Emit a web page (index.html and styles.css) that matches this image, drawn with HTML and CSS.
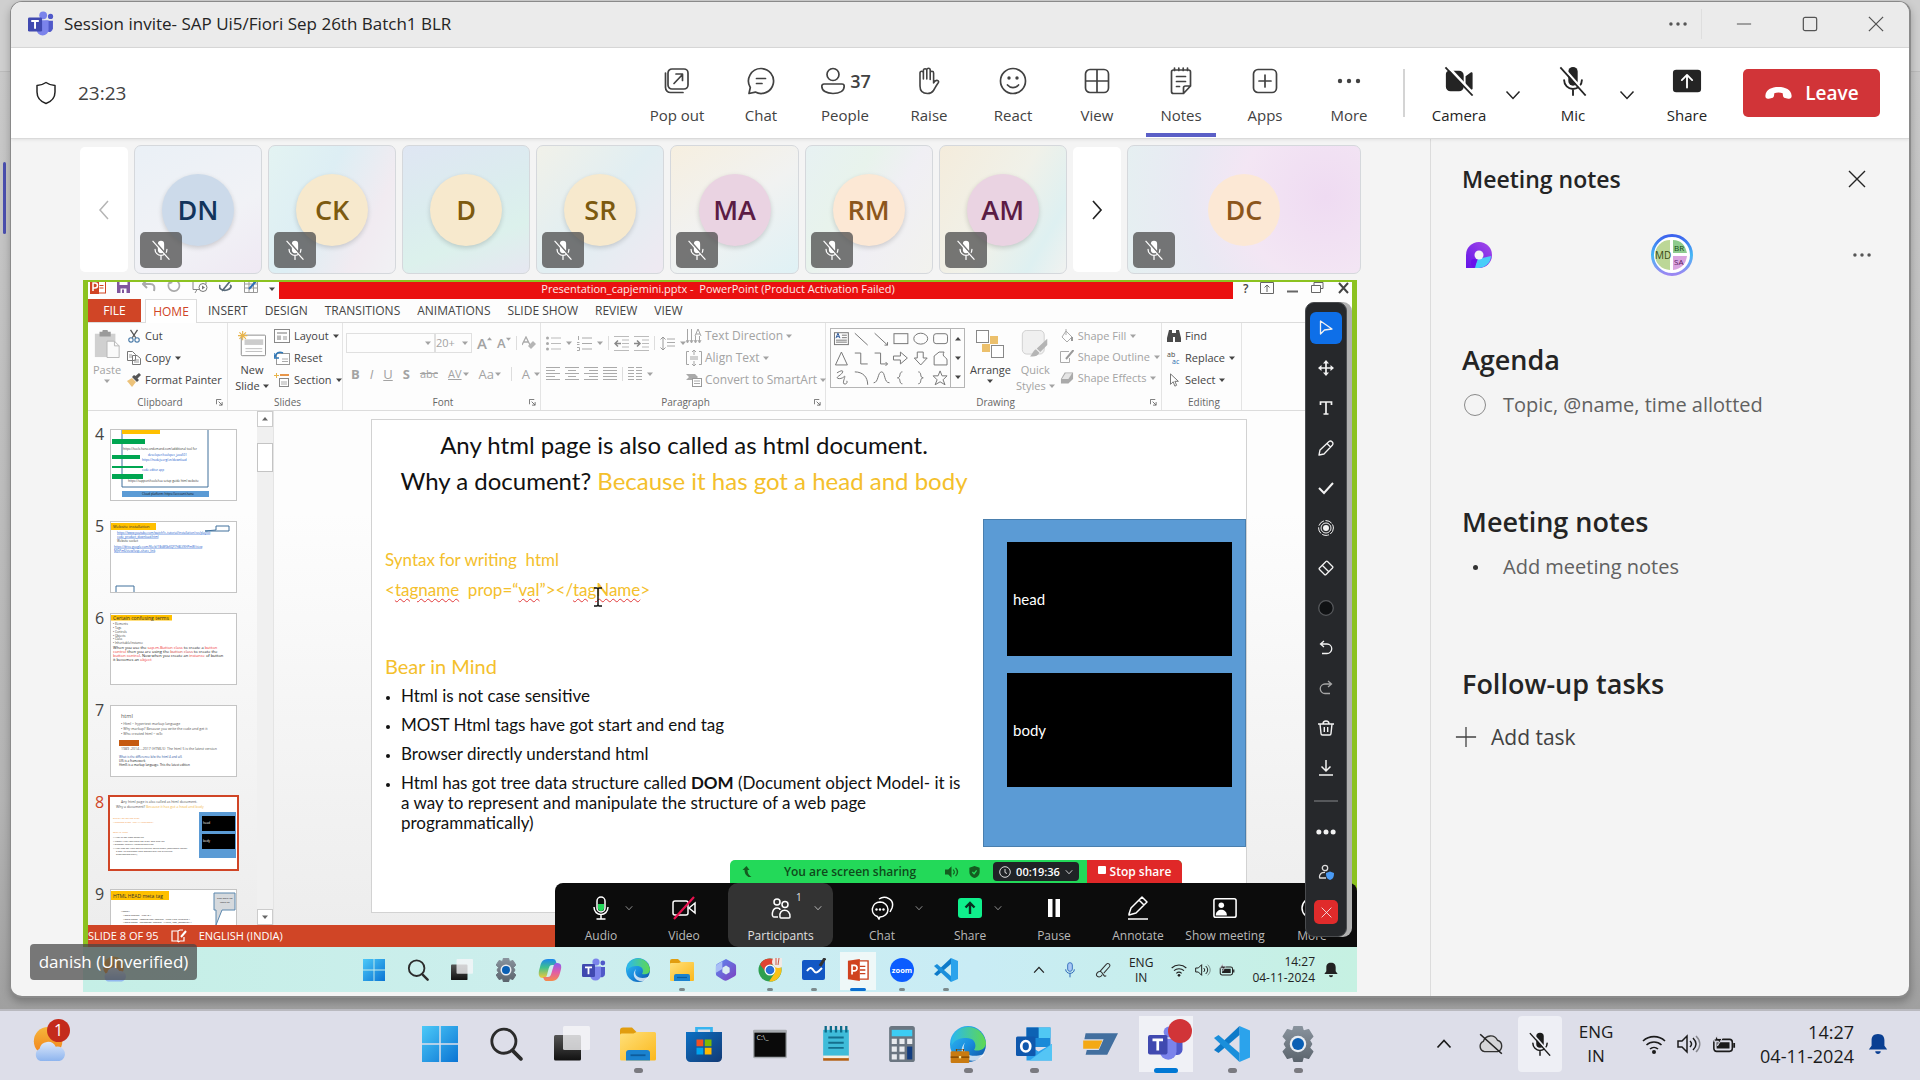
FILE: index.html
```html
<!DOCTYPE html>
<html lang="en">
<head>
<meta charset="utf-8">
<title>Session invite- SAP Ui5/Fiori Sep 26th Batch1 BLR</title>
<link rel="stylesheet" href="styles.css">
</head>
<body>
<svg class="defs" aria-hidden="true">
  <defs>
    <linearGradient id="gWin" x1="0" y1="0" x2="1" y2="1"><stop offset="0" stop-color="#4cc9f8"/><stop offset="1" stop-color="#0a74d4"/></linearGradient>
    <linearGradient id="gFold" x1="0" y1="0" x2="1" y2="1"><stop offset="0" stop-color="#ffe07a"/><stop offset="1" stop-color="#fbb81c"/></linearGradient>
    <linearGradient id="gEdge" x1="0" y1="0" x2="1" y2="1"><stop offset="0" stop-color="#35c1f1"/><stop offset=".5" stop-color="#1a8fe0"/><stop offset="1" stop-color="#0c4fa0"/></linearGradient>
    <linearGradient id="gEdge2" x1="0" y1="0" x2="1" y2="0"><stop offset="0" stop-color="#2bb8ee"/><stop offset="1" stop-color="#5fd94f"/></linearGradient>
    <linearGradient id="gStore" x1="0" y1="0" x2="1" y2="1"><stop offset="0" stop-color="#0c70c4"/><stop offset="1" stop-color="#123a75"/></linearGradient>
    <linearGradient id="gLoop" x1="1" y1="0" x2="0" y2="1"><stop offset="0" stop-color="#a44be8"/><stop offset="1" stop-color="#6414e8"/></linearGradient>
    <linearGradient id="gCop" x1="0" y1="0" x2="0" y2="1"><stop offset="0" stop-color="#1b86ee"/><stop offset=".45" stop-color="#3fc08d"/><stop offset="1" stop-color="#f1c93b"/></linearGradient>
    <linearGradient id="gCop2" x1="0" y1="0" x2="0" y2="1"><stop offset="0" stop-color="#8a5cf0"/><stop offset=".5" stop-color="#e05ca8"/><stop offset="1" stop-color="#f58a4b"/></linearGradient>
    <linearGradient id="gM365" x1="0" y1="0" x2="1" y2="1"><stop offset="0" stop-color="#5d8af0"/><stop offset="1" stop-color="#7d3fc0"/></linearGradient>
    <linearGradient id="gRing" x1="0" y1="0" x2="0" y2="1"><stop offset="0" stop-color="#3d62ee"/><stop offset=".5" stop-color="#45b8f5"/><stop offset="1" stop-color="#9b86f2"/></linearGradient>
    <linearGradient id="gDark" x1="0" y1="0" x2="0" y2="1"><stop offset="0" stop-color="#555"/><stop offset="1" stop-color="#111"/></linearGradient>
    <linearGradient id="gSun" x1="0" y1="0" x2="0" y2="1"><stop offset="0" stop-color="#f6b73b"/><stop offset="1" stop-color="#f07f1b"/></linearGradient>
    <linearGradient id="gCloud" x1="0" y1="0" x2="0" y2="1"><stop offset="0" stop-color="#dce8fb"/><stop offset="1" stop-color="#8db4ee"/></linearGradient>
    <linearGradient id="gGear" x1="0" y1="0" x2="0" y2="1"><stop offset="0" stop-color="#8a949e"/><stop offset="1" stop-color="#5a636c"/></linearGradient>
  </defs>

  <!-- window and call icons -->
  <symbol id="teams" viewBox="0 0 24 24"><circle cx="14" cy="4" r="3.6" fill="#7b83eb"/><circle cx="20.800" cy="5" r="2.400" fill="#5059c9"/><path d="M16 9h7v7a3.500 3.500 0 0 1-5 3z" fill="#5059c9"/><path d="M8 8.500h11v8.500a5.500 5.500 0 0 1-11 0z" fill="#7b83eb"/><rect y="6" width="13" height="13" rx="1.300" fill="#4049b0"/><path d="M3 9.300h7M6.500 9.300v7" stroke="#fff" stroke-width="1.800" fill="none"/></symbol>
  <symbol id="shield" viewBox="0 0 24 24"><path d="M12 1.500c2.600 1.900 5.600 2.800 9 3v6.500c0 5.800-3.500 9.500-9 11.500-5.500-2-9-5.700-9-11.500V4.500c3.400-.2 6.400-1.100 9-3z" fill="none" stroke="currentColor" stroke-width="1.500" stroke-linejoin="round"/></symbol>
  <symbol id="popout" viewBox="0 0 28 28"><g fill="none" stroke="currentColor" stroke-width="1.700" stroke-linecap="round" stroke-linejoin="round"><rect x="5" y="2" width="20" height="20" rx="4"/><path d="M2.500 6v14.500a5 5 0 0 0 5 5H20"/><path d="M11 16.500l8.500-9M13 7h6.500v6.500"/></g></symbol>
  <symbol id="chat" viewBox="0 0 28 28"><g fill="none" stroke="currentColor" stroke-width="1.700" stroke-linecap="round" stroke-linejoin="round"><path d="M14 1.500a12.500 12.500 0 1 1-5.700 23.600L2 26.500l1.300-6A12.500 12.500 0 0 1 14 1.500z"/><path d="M9.500 11.500h9M9.500 16.500h5.500"/></g></symbol>
  <symbol id="person" viewBox="0 0 28 28"><g fill="none" stroke="currentColor" stroke-width="1.700"><circle cx="14" cy="7.500" r="6"/><path d="M5 17h18a2.200 2.200 0 0 1 2.200 2.200c0 4.600-4.600 7.300-11.200 7.300S2.800 23.800 2.800 19.200A2.200 2.200 0 0 1 5 17z"/></g></symbol>
  <symbol id="hand" viewBox="0 0 28 28"><path d="M5 15V6a1.700 1.700 0 0 1 3.400 0v6V3.500a1.700 1.700 0 0 1 3.400 0V12 3a1.700 1.700 0 0 1 3.400 0v9.500V6a1.700 1.700 0 0 1 3.400 0v10c1-2 2.500-3 4-2.500 1.300.5 1.200 1.600.5 2.500-2 2.600-3 5-4.600 7.500-1.300 2-3 3-6 3-5 0-7.500-3-7.500-7.500z" fill="none" stroke="currentColor" stroke-width="1.600" stroke-linejoin="round"/></symbol>
  <symbol id="smile" viewBox="0 0 28 28"><circle cx="14" cy="14" r="12.500" fill="none" stroke="currentColor" stroke-width="1.700"/><circle cx="10" cy="11" r="1.700" fill="currentColor"/><circle cx="18" cy="11" r="1.700" fill="currentColor"/><path d="M8.500 18c3 3.500 8 3.500 11 0" fill="none" stroke="currentColor" stroke-width="1.700" stroke-linecap="round"/></symbol>
  <symbol id="grid" viewBox="0 0 28 28"><path d="M7 2.500h14a4.500 4.500 0 0 1 4.500 4.500v14a4.500 4.500 0 0 1-4.500 4.500H7A4.500 4.500 0 0 1 2.500 21V7A4.500 4.500 0 0 1 7 2.500zM14 2.500v23M2.500 14h23" fill="none" stroke="currentColor" stroke-width="1.700"/></symbol>
  <symbol id="notes" viewBox="0 0 28 28"><g fill="none" stroke="currentColor" stroke-width="1.700" stroke-linecap="round" stroke-linejoin="round"><path d="M4.500 5a2 2 0 0 1 2-2h15a2 2 0 0 1 2 2v14l-7 7.500h-10a2 2 0 0 1-2-2zM23.500 19h-5a2 2 0 0 0-2 2v5.500"/><path d="M7.500 1v2.500M11.800 1v2.500M16.200 1v2.500M20.500 1v2.500M9.500 9.500h9M9.500 14.500h9M9.500 19.500h3"/></g></symbol>
  <symbol id="apps" viewBox="0 0 28 28"><rect x="2.500" y="2.500" width="23" height="23" rx="4.500" fill="none" stroke="currentColor" stroke-width="1.700"/><path d="M14 8v12M8 14h12" stroke="currentColor" stroke-width="1.700" stroke-linecap="round"/></symbol>
  <symbol id="dots" viewBox="0 0 28 28"><g fill="currentColor"><circle cx="5" cy="14" r="2.200"/><circle cx="14" cy="14" r="2.200"/><circle cx="23" cy="14" r="2.200"/></g></symbol>
  <symbol id="bigdots" viewBox="0 0 28 28"><g fill="currentColor"><circle cx="4" cy="14" r="3.500"/><circle cx="14" cy="14" r="3.500"/><circle cx="24" cy="14" r="3.500"/></g></symbol>
  <symbol id="camoff" viewBox="0 0 32 32"><path d="M2 8.500A4 4 0 0 1 6 5h10a5 5 0 0 1 5 5v12a5 5 0 0 1-5 5H7a5 5 0 0 1-5-5zM23 11l5.500-4c1-.6 2 0 2 1v16c0 1-1 1.600-2 1L23 21z" fill="currentColor"/><path d="M4 .500l28 30" stroke="#fff" stroke-width="3"/><path d="M1.500 1.500l29 30" stroke="currentColor" stroke-width="1.900"/></symbol>
  <symbol id="micoff" viewBox="0 0 32 32"><rect x="11" y="1" width="10" height="20" rx="5" fill="currentColor"/><path d="M6.500 15a9.500 9.500 0 0 0 19 0M16 25v6" fill="none" stroke="currentColor" stroke-width="2" stroke-linecap="round"/><path d="M5 1l25 28.500" stroke="var(--cut,#fff)" stroke-width="2.500"/><path d="M2.500 1.500l27 30" stroke="currentColor" stroke-width="1.900"/></symbol>
  <symbol id="shareup" viewBox="0 0 32 28"><rect x="1" y="2" width="30" height="24" rx="3.500" fill="currentColor"/><path d="M16 21V8M10.500 13L16 7.500 21.500 13" fill="none" stroke="var(--cut,#fff)" stroke-width="2" stroke-linecap="round" stroke-linejoin="round"/></symbol>
  <symbol id="hang" viewBox="0 0 32 16"><path d="M1 11C1.500 4 8 1 16 1s14.500 3 15 10c.2 3-1.500 4-4 3.500l-3.500-.7c-1.700-.4-2.300-1.500-2.500-3.500l-.2-2c-2.600-1-7-1-9.600 0l-.2 2c-.2 2-.8 3.100-2.500 3.500L5 14.500C2.500 15 .8 14 1 11z" fill="currentColor"/></symbol>
  <symbol id="down" viewBox="0 0 16 16"><path d="M1.500 4.500L8 11.500l6.500-7" fill="none" stroke="currentColor" stroke-width="1.500"/></symbol>
  <symbol id="up" viewBox="0 0 16 16"><path d="M1.500 11.500L8 4.500l6.500 7" fill="none" stroke="currentColor" stroke-width="1.700"/></symbol>
  <symbol id="left" viewBox="0 0 16 24"><path d="M12 3L4 12l8 9" fill="none" stroke="currentColor" stroke-width="1.500"/></symbol>
  <symbol id="right" viewBox="0 0 16 24"><path d="M4 3l8 9-8 9" fill="none" stroke="currentColor" stroke-width="1.700"/></symbol>
  <symbol id="x" viewBox="0 0 18 18"><path d="M1 1l16 16M17 1L1 17" stroke="currentColor" stroke-width="1.400"/></symbol>
  <symbol id="min" viewBox="0 0 18 18"><path d="M1 9h16" stroke="currentColor" stroke-width="1.400"/></symbol>
  <symbol id="max" viewBox="0 0 18 18"><rect x="1.500" y="1.500" width="15" height="15" rx="2" fill="none" stroke="currentColor" stroke-width="1.400"/></symbol>
  <symbol id="plus" viewBox="0 0 24 24"><path d="M12 1v22M1 12h22" stroke="currentColor" stroke-width="1.400"/></symbol>
  <symbol id="loop" viewBox="0 0 26 26"><path d="M0 26V13A13 13 0 1 1 13 26z" fill="url(#gLoop)"/><path d="M8 26l4-9 13-3a12.500 12.500 0 0 1-12 12z" fill="#49cdf8"/><path d="M9 26c-3 0-4-3-4-6 0-4 4-3 6-2z" fill="#6a12ea"/><circle cx="13" cy="13" r="4.500" fill="#f4f4f4"/></symbol>

  <!-- ribbon icons -->
  <symbol id="caret" viewBox="0 0 6 6"><path d="M0 1.500h6L3 5z" fill="currentColor"/></symbol>
  <symbol id="launch" viewBox="0 0 8 8"><path d="M.5 6V.5H6M3 3l4 4M7 3.500V7H3.500" fill="none" stroke="currentColor"/></symbol>
  <symbol id="pplogo" viewBox="0 0 16 14"><rect x="7" y="1" width="8.500" height="12" fill="#fff" stroke="#d04423"/><path d="M9.500 5.500h4M9.500 8h4" stroke="#d04423"/><path d="M0 0h9v14H0z" fill="#d04423"/><path d="M3 11V3h2a2 2 0 0 1 0 5H3" fill="none" stroke="#fff" stroke-width="1.500"/></symbol>
  <symbol id="save" viewBox="0 0 14 14"><path d="M0 0h13v14H0z" fill="#80579d"/><path d="M2.500 0h8v6h-8z" fill="#fff"/><path d="M3.500 9.500h6V14h-6z" fill="#fff"/><path d="M5 10.500h2V14H5z" fill="#80579d"/></symbol>
  <symbol id="undo" viewBox="0 0 14 12"><path d="M5 0L1 4l4 4M1 4h7c4 0 5 2 4 7" fill="none" stroke="#aaa" stroke-width="2"/></symbol>
  <symbol id="redo" viewBox="0 0 14 14"><path d="M9 1.500a5.500 5.500 0 1 1-5 .4M3 0l1.500 3.500L1 5" fill="none" stroke="#aaa" stroke-width="1.700"/></symbol>
  <symbol id="play" viewBox="0 0 16 14"><path d="M8 9.500H1V1h13v3M5 9.500L3 13" fill="none" stroke="#888"/><circle cx="11" cy="7.500" r="4" fill="#fff" stroke="#777"/><path d="M10 5.500l3 2-3 2z" fill="#777"/></symbol>
  <symbol id="draw" viewBox="0 0 14 14"><path d="M13 0L3 12M1 6c-2 4 3 6 7 5s5-4 3-5" fill="none" stroke="#5a6b7a" stroke-width="1.700"/></symbol>
  <symbol id="tabledraw" viewBox="0 0 14 14"><path d="M.5.500h13v13H.5zM.5 5h13M.5 9h13M5 .500v13M9.500.500v13" fill="none" stroke="#999"/><path d="M14 0L5 10" stroke="#2f6fb5" stroke-width="2"/></symbol>
  <symbol id="paste" viewBox="0 0 28 30"><path d="M1 4h22v25H1z" fill="#d0d0d0"/><path d="M6 2h3a3 3 0 0 1 6 0h3v5H6z" fill="#9a9a9a"/><path d="M14 12h8l5 5v12.500H14z" fill="#fafafa" stroke="#b5b5b5"/><path d="M22 12v5h5" fill="none" stroke="#b5b5b5"/></symbol>
  <symbol id="cut" viewBox="0 0 14 16"><path d="M3 1l6 9M11 1L5 10" stroke="#555" stroke-width="1.500"/><circle cx="3.500" cy="12.500" r="2.500" fill="none" stroke="#4a7ba8" stroke-width="1.300"/><circle cx="10.500" cy="12.500" r="2.500" fill="none" stroke="#4a7ba8" stroke-width="1.300"/></symbol>
  <symbol id="copy" viewBox="0 0 14 14"><path d="M.5.500h5l3 3v6h-8z M5.500 4.500h4.500l3.500 3v6h-8z" fill="#fff" stroke="#777"/><path d="M2 4h3M2 6h3M7 9h5M7 11h5" stroke="#999"/></symbol>
  <symbol id="brush" viewBox="0 0 14 14"><path d="M0 8l5-3 4 4-4 5z" fill="#ecc27a"/><path d="M5 4l5 5 2-2-1.500-1.500L14 2l-2-2-3.500 3L7 2z" fill="#555"/></symbol>
  <symbol id="newslide" viewBox="0 0 30 28"><rect x="3.500" y="4.500" width="26" height="22" rx="1" fill="#fff" stroke="#888"/><path d="M7 9h20v6H7z" fill="#ccc"/><path d="M8 19h18M8 22h18" stroke="#bbb"/><path d="M5 0v10M0 5h10M1.500 1.500l7 7M8.500 1.500l-7 7" stroke="#e8b44a" stroke-width="1.200"/></symbol>
  <symbol id="layout" viewBox="0 0 16 14"><rect x=".5" y=".5" width="15" height="13" fill="#fff" stroke="#888"/><path d="M3 3h10v2H3zM3 6.500h4v4.500H3z" fill="#bbb"/><path d="M9 8h4M9 10h4" stroke="#999"/></symbol>
  <symbol id="reset" viewBox="0 0 16 14"><rect x="2.500" y="2.500" width="13" height="11" fill="#fff" stroke="#999"/><path d="M8 8h6M8 10.500h6" stroke="#aaa"/><path d="M0 2v5h5M1 6c1-4 4-6 8-4" fill="none" stroke="#2f78b8" stroke-width="1.500"/></symbol>
  <symbol id="section" viewBox="0 0 16 14"><path d="M6 2h9" stroke="#e8964a" stroke-width="2"/><rect x="5.500" y="5.500" width="9" height="8" fill="#fff" stroke="#888"/><path d="M7 9h6M7 11h6" stroke="#aaa"/><path d="M2.500 0v5M0 2.500h5" stroke="#e8b44a"/></symbol>
  <symbol id="eraseA" viewBox="0 0 14 14"><path d="M0 9l4-8 4 8M1.500 6h5" fill="none" stroke="#aaa" stroke-width="1.300"/><path d="M11 5l3 3-5 5-3-3z" fill="#b5b5b5"/></symbol>
  <symbol id="bullets" viewBox="0 0 15 15"><path d="M5 2h10M5 7.500h10M5 13h10" stroke="#bbb"/><circle cx="1.500" cy="2" r="1.500" fill="#aaa"/><circle cx="1.500" cy="7.500" r="1.500" fill="#aaa"/><circle cx="1.500" cy="13" r="1.500" fill="#aaa"/></symbol>
  <symbol id="numbers" viewBox="0 0 15 15"><path d="M5 2h10M5 7.500h10M5 13h10M1.500 0v4M0 6.500h2.500M0 8.500h2.500M0 11.500h2.500v3H0" stroke="#aaa" fill="none"/></symbol>
  <symbol id="outdent" viewBox="0 0 15 15"><path d="M0 .500h15M8 4h7M8 7.500h7M8 11h7M0 14.500h15" stroke="#bbb"/><path d="M7 7.500H1M4 4.500l-3 3 3 3" stroke="#888" stroke-width="1.500" fill="none"/></symbol>
  <symbol id="indent" viewBox="0 0 15 15"><path d="M0 .500h15M8 4h7M8 7.500h7M8 11h7M0 14.500h15" stroke="#bbb"/><path d="M0 7.500h6M3 4.500l3 3-3 3" stroke="#888" stroke-width="1.500" fill="none"/></symbol>
  <symbol id="spacing" viewBox="0 0 15 15"><path d="M3 1v13M.5 3.500L3 1l2.500 2.500M.5 11.500L3 14l2.500-2.500" stroke="#999" fill="none"/><path d="M7 3h8M7 6.500h8M7 10h8" stroke="#aaa"/></symbol>
  <symbol id="al1" viewBox="0 0 14 14"><path d="M0 .500h14M0 3.500h9M0 6.500h14M0 9.500h9M0 12.500h14" stroke="#aaa"/></symbol>
  <symbol id="al2" viewBox="0 0 14 14"><path d="M0 .500h14M3 3.500h8M0 6.500h14M3 9.500h8M0 12.500h14" stroke="#aaa"/></symbol>
  <symbol id="al3" viewBox="0 0 14 14"><path d="M0 .500h14M5 3.500h9M0 6.500h14M5 9.500h9M0 12.500h14" stroke="#aaa"/></symbol>
  <symbol id="al4" viewBox="0 0 14 14"><path d="M0 .500h14M0 3.500h14M0 6.500h14M0 9.500h14M0 12.500h14" stroke="#aaa"/></symbol>
  <symbol id="cols" viewBox="0 0 14 14"><path d="M0 .500h6M8 .500h6M0 3.500h6M8 3.500h6M0 6.500h6M8 6.500h6M0 9.500h6M8 9.500h6M0 12.500h6M8 12.500h6" stroke="#aaa"/></symbol>
  <symbol id="tdir" viewBox="0 0 16 16"><path d="M1.500 1v13M5.500 1v13M9.500 8v6M13.500 8v6M0 12l1.500 3L3 12M4 12l1.500 3L7 12M8 12l1.500 3 1.500-3M12 12l1.500 3 1.500-3M9 8l3-7 3 7M10 6h4" fill="none" stroke="#a5a5a5"/></symbol>
  <symbol id="atext" viewBox="0 0 16 16"><path d="M3 1.500H.5v13H3M13 1.500h2.500v13H13M4 7h8M4 9h8M8 0v5M6 2l2-2 2 2M8 16v-5M6 14l2 2 2-2" fill="none" stroke="#a5a5a5"/></symbol>
  <symbol id="smart" viewBox="0 0 16 14"><path d="M0 1h9l3 3-3 3H0l3-3z" fill="#aaa"/><rect x="6.500" y="5.500" width="9" height="8" fill="#fff" stroke="#999"/><path d="M8 8h6M8 10.500h6" stroke="#aaa"/></symbol>
  <symbol id="arrange" viewBox="0 0 28 28"><path d="M14 6h8v8h-8zM6 14h8v8H6z" fill="#ecc06c"/><rect x=".5" y=".5" width="12" height="12" fill="#fff" stroke="#888"/><rect x="15.500" y="15.500" width="12" height="12" fill="#fff" stroke="#888"/></symbol>
  <symbol id="quick" viewBox="0 0 30 32"><rect x=".5" y=".5" width="25" height="27" rx="5" fill="#f0f0f0" stroke="#ccc"/><path d="M29 10v7l-8 8-4-4zM16 22l4 4c-2 4-6 5-11 4 3-1 3-6 7-8z" fill="#b5b5b5"/></symbol>
  <symbol id="fill" viewBox="0 0 14 14"><path d="M6 2l6 6-5 5-5-5zM6 0v6" fill="none" stroke="#aaa"/><path d="M12 8v4" stroke="#999" stroke-width="2"/></symbol>
  <symbol id="outline" viewBox="0 0 14 14"><path d="M9 1.500H.5v11h9V8" fill="none" stroke="#aaa"/><path d="M13.500 0L6 9" stroke="#999" stroke-width="2"/></symbol>
  <symbol id="effects" viewBox="0 0 15 14"><path d="M5 1h9v7l-5 5H1V8z" fill="#aaa"/><path d="M6 2h7L9 8H2z" fill="#e5e5e5"/></symbol>
  <symbol id="find" viewBox="0 0 14 14"><path d="M2 1h3v3h4V1h3l2 8v4H8V8H6v5H0V9z" fill="#4a4a4a"/></symbol>
  <symbol id="arrowptr" viewBox="0 0 12 16"><path d="M2 1v12l3-3 2 5 2-1-2-4.500h4z" fill="#fff" stroke="#666"/></symbol>
  <symbol id="book" viewBox="0 0 16 14"><path d="M7 2H1v10h6M7 2v11M7 2l2-1 3 0M7 13l2-1h4V8" fill="none" stroke="#fff" stroke-width="1.200"/><path d="M15 2l-5 6" stroke="#fff" stroke-width="2"/></symbol>

  <!-- annotate and zoom icons -->
  <symbol id="ptr" viewBox="0 0 16 16"><path d="M2.500 1v13l4-4 7.500-1z" fill="none" stroke="currentColor" stroke-width="1.300" stroke-linejoin="round"/></symbol>
  <symbol id="move" viewBox="0 0 16 16"><path d="M8 2v12M2 8h12" stroke="currentColor" stroke-width="1.700"/><path d="M8 0l3 3.500H5zM8 16l3-3.500H5zM0 8l3.500-3v6zM16 8l-3.500-3v6z" fill="currentColor"/></symbol>
  <symbol id="ttool" viewBox="0 0 16 16"><path d="M2.500 5V2h11v3M8 2v12M5.500 14h5" fill="none" stroke="currentColor" stroke-width="1.700"/></symbol>
  <symbol id="pen" viewBox="0 0 16 16"><path d="M1 15l1-5L11 1.500c2-1.500 5 1 3.500 3.500L6 14zM9 3.500L12.500 7" fill="none" stroke="currentColor" stroke-width="1.300" stroke-linejoin="round"/></symbol>
  <symbol id="check" viewBox="0 0 16 16"><path d="M1 8l5 5 9-10" fill="none" stroke="currentColor" stroke-width="2"/></symbol>
  <symbol id="spot" viewBox="0 0 16 16"><circle cx="8" cy="8" r="3" fill="currentColor"/><circle cx="8" cy="8" r="5" fill="none" stroke="currentColor"/><circle cx="8" cy="8" r="7.400" fill="none" stroke="currentColor" stroke-dasharray="7 1.500"/></symbol>
  <symbol id="eraser" viewBox="0 0 16 16"><path d="M9.500 1.500l5 5c.5.500.5 1 0 1.500L8 14.500c-.5.500-1 .5-1.500 0l-5-5c-.5-.5-.5-1 0-1.500L8 1.500c.5-.5 1-.5 1.500 0zM4.500 5.500L11 12" fill="none" stroke="currentColor" stroke-width="1.300"/></symbol>
  <symbol id="ink" viewBox="0 0 16 16"><circle cx="8" cy="8" r="7.300" fill="#101214" stroke="#56585b" stroke-width="1.300"/></symbol>
  <symbol id="aundo" viewBox="0 0 16 16"><path d="M6 1L2.500 4 6 7M2.500 4H9a4.500 4.500 0 0 1 0 9.500H4" fill="none" stroke="currentColor" stroke-width="1.300"/></symbol>
  <symbol id="aredo" viewBox="0 0 16 16"><path d="M10 1l3.500 3L10 7M13.500 4H7a4.500 4.500 0 0 0 0 9.500h5" fill="none" stroke="currentColor" stroke-width="1.300"/></symbol>
  <symbol id="trash" viewBox="0 0 16 16"><path d="M0 4h16M5 4c0-4 6-4 6 0M2 4l1 9.500c0 1 .5 1.500 1.500 1.500h7c1 0 1.500-.5 1.500-1.500L14 4M6.300 7v5M9.700 7v5" fill="none" stroke="currentColor" stroke-width="1.400"/></symbol>
  <symbol id="dl" viewBox="0 0 16 16"><path d="M8 0v11M3.500 6.500L8 11l4.500-4.500M1 15h14" fill="none" stroke="currentColor" stroke-width="1.500"/></symbol>
  <symbol id="pshield" viewBox="0 0 16 16"><circle cx="7" cy="4" r="2.700" fill="none" stroke="#ddd" stroke-width="1.300"/><path d="M8 14H2c-1 0-1-6 5-5.500" fill="none" stroke="#ddd" stroke-width="1.300"/><path d="M12 7.500l4 1.500c0 4-1 6-4 7-3-1-4-3-4-7z" fill="#4a9bf5"/></symbol>
  <symbol id="zmic" viewBox="0 0 24 24"><rect x="8" y="1" width="8" height="15" rx="4" fill="none" stroke="#fff" stroke-width="1.500"/><path d="M9 8h6v4a3 3 0 0 1-6 0z" fill="#23d959"/><path d="M5 11c0 10 14 10 14 0M12 18.500v4M7.500 23h9" fill="none" stroke="#fff" stroke-width="1.500"/></symbol>
  <symbol id="zvid" viewBox="0 0 24 24"><rect x="1" y="5" width="15" height="14" rx="2" fill="none" stroke="#fff" stroke-width="1.500"/><path d="M17 12l6-5v10z" fill="none" stroke="#fff" stroke-width="1.500"/><path d="M22 1L2 23" stroke="#e8114f" stroke-width="2.200"/></symbol>
  <symbol id="zppl" viewBox="0 0 24 24"><g fill="none" stroke="#fff" stroke-width="1.500"><circle cx="8" cy="6" r="3"/><circle cx="16" cy="8.500" r="3"/><path d="M9 21H5c-3 0-2-9 3-9 2 0 3 1 3 2M11 21c-2-9 11-9 10 0 0 .6-.4 1-1 1h-8c-.6 0-1-.4-1-1z"/></g></symbol>
  <symbol id="zchat" viewBox="0 0 24 24"><g fill="none" stroke="#fff" stroke-width="1.500"><path d="M10 6a8 7.500 0 1 1 0 15l-1 2-1.500-2.500A8 7.500 0 0 1 10 6zM9 3c6-4 16 0 13 9l-2 4"/></g><g fill="#fff"><circle cx="6.500" cy="13.500" r="1.200"/><circle cx="10" cy="13.500" r="1.200"/><circle cx="13.500" cy="13.500" r="1.200"/></g></symbol>
  <symbol id="zshare" viewBox="0 0 24 24"><rect y="2" width="24" height="20" rx="3" fill="#0ff08c"/><path d="M12 18V7M7.500 11.500L12 7l4.500 4.500" fill="none" stroke="#08301f" stroke-width="2.400"/></symbol>
  <symbol id="zpause" viewBox="0 0 24 24"><path d="M6 3h4.500v18H6zM13.500 3H18v18h-4.500z" fill="#fff"/></symbol>
  <symbol id="zpen" viewBox="0 0 24 24"><path d="M3 18l2-6L16 1l5 5-11 11-7 2zM13 4l5 5M2 23h20" fill="none" stroke="#fff" stroke-width="1.500" stroke-linejoin="round"/></symbol>
  <symbol id="zshow" viewBox="0 0 26 22"><rect x="1" y="1" width="24" height="20" rx="2" fill="none" stroke="#fff" stroke-width="1.700"/><circle cx="9" cy="8" r="3" fill="#fff"/><path d="M3 19c0-8 12-8 12 0z" fill="#fff"/></symbol>
  <symbol id="zmore" viewBox="0 0 24 24"><circle cx="12" cy="12" r="10" fill="none" stroke="#fff" stroke-width="1.500"/><circle cx="7" cy="12" r="1.300" fill="#fff"/></symbol>

  <!-- taskbar icons -->
  <symbol id="win" viewBox="0 0 24 24"><path d="M0 0h11.500v11.500H0zM12.500 0H24v11.500H12.500zM0 12.500h11.500V24H0zM12.500 12.500H24V24H12.500z" fill="url(#gWin)"/></symbol>
  <symbol id="search" viewBox="0 0 24 24"><circle cx="10.500" cy="10" r="8.500" fill="none" stroke="#2b2b2b" stroke-width="2"/><path d="M16.500 16.500l6 6" stroke="#2b2b2b" stroke-width="2.600" stroke-linecap="round"/></symbol>
  <symbol id="taskview" viewBox="0 0 24 24"><rect y="6" width="18" height="17" rx="1" fill="url(#gDark)"/><rect x="6" y="0" width="18" height="16" rx="1" fill="#f6f6f8" opacity=".78"/></symbol>
  <symbol id="folder" viewBox="0 0 24 24"><path d="M0 3a2 2 0 0 1 2-2h6l3 3v5H0z" fill="#e19d0f"/><path d="M0 6a1 1 0 0 1 1-1l8 .0 2-1h12a1 1 0 0 1 1 1v17a1 1 0 0 1-1 1H1a1 1 0 0 1-1-1z" fill="url(#gFold)"/><path d="M4 23v-5a2 2 0 0 1 2-2h12a2 2 0 0 1 2 2v5z" fill="#1a82cf"/><path d="M7 19.500h10" stroke="#0d5c9d" stroke-width="1.200"/></symbol>
  <symbol id="gear" viewBox="0 0 24 24"><path d="M9.500 0h5l1 3.500 3.500-1 2.800 4.500L19.500 9.500l1.500 2.500-1.500 2.500 2.300 2.500-2.800 4.500-3.500-1-1 3.500h-5l-1-3.500-3.500 1L2.200 17l2.300-2.500L3 12l1.500-2.500L2.200 7 5 2.500l3.500 1z" fill="url(#gGear)" stroke="url(#gGear)" stroke-linejoin="round"/><circle cx="12" cy="12" r="5.500" fill="#e9edf2"/><circle cx="12" cy="12" r="4" fill="#0a5fb4"/></symbol>
  <symbol id="copilot" viewBox="0 0 24 24"><path d="M10 1h5c3 0 3 3 4 6h-5c-3 0-3 3-5 10-1 3-2 3-4 3-5 0-5-5-3-11 1-4 2-8 8-8z" fill="url(#gCop)"/><path d="M14 23H9c-3 0-3-2-4-4h5c3 0 3-3 5-9 1-4 2-5 4-5 5 0 5 4 3 10-1 4-3 8-8 8z" fill="url(#gCop2)"/></symbol>
  <symbol id="edge" viewBox="0 0 24 24"><circle cx="12" cy="12" r="12" fill="url(#gEdge)"/><path d="M1 9C4-2 21-3 24 11c0 5-5 6-8 5 2-3 1-8-5-8-4 0-8 1-10 5z" fill="url(#gEdge2)"/><path d="M10 11c-3 6 2 11 12 8 1-1 1 0 0 1-8 8-19-1-12-9z" fill="#fff" opacity=".75"/></symbol>
  <symbol id="m365" viewBox="0 0 24 24"><path d="M12 0l9 5c2 1 2 2 2 4v6c0 2 0 3-2 4l-7 4c-2 1-3 1-5 0l-6-4c-2-1-2-2-2-4V9c0-2 0-3 2-4z" fill="url(#gM365)"/><path d="M12 7l4 2.500v5L12 17l-4-2.500v-5z" fill="#d9edf2"/><path d="M8 2.500L3 5.500C1 6.500 1 8 1 9v6l7-4z" fill="#a8bdf6"/></symbol>
  <symbol id="chrome" viewBox="0 0 24 24"><circle cx="12" cy="12" r="11.500" fill="#2e9f4f"/><path d="M12 .500A11.500 11.500 0 0 1 22 6.500H12L7 13 2 6.500A11.500 11.500 0 0 1 12 .5z" fill="#e04333"/><path d="M22 6.500a11.500 11.500 0 0 1-11 17l6-9V7z" fill="#fbc116"/><circle cx="12" cy="12" r="5.500" fill="#fff"/><circle cx="12" cy="12" r="4.300" fill="#2a6fd6"/><circle cx="20" cy="4" r="6" fill="#f0e9e6"/><path d="M18 0v7M21 0l-1 7" stroke="#c85a4a"/></symbol>
  <symbol id="wboard" viewBox="0 0 24 24"><rect y="2" width="23" height="20" rx="2" fill="#1257c4"/><path d="M5 13c3-5 5-3 7 0s4 1 8-3" fill="none" stroke="#fff" stroke-width="2"/><path d="M23 0l-5 8" stroke="#333" stroke-width="3"/></symbol>
  <symbol id="ppt" viewBox="0 0 24 24"><path d="M10 2h13v20H10z" fill="#fff" stroke="#c8401f" stroke-width="1.500"/><path d="M14 8h6M14 12h6M14 16h6" stroke="#c8401f" stroke-width="1.500"/><path d="M1 2L14 0v24L1 22z" fill="#d0421f"/><path d="M5.500 17V7h2.500a2.800 2.800 0 0 1 0 6H5.500" fill="none" stroke="#fff" stroke-width="1.800"/></symbol>
  <symbol id="zoom" viewBox="0 0 24 24"><circle cx="12" cy="12" r="12" fill="#0b5cff"/><text x="12" y="14.500" font-size="7.500" font-weight="700" text-anchor="middle" fill="#fff">zoom</text></symbol>
  <symbol id="vscode" viewBox="0 0 24 24"><path d="M17 0l7 3v18l-7 3z" fill="#2ba3ec"/><path d="M17 0v6L3 18l-3-2z" fill="#0d7ac9"/><path d="M17 24v-6L3 6 0 8z" fill="#1a8fdb"/></symbol>
  <symbol id="store" viewBox="0 0 24 24"><path d="M7 5V1.500h10V5" fill="none" stroke="#37b4f0" stroke-width="1.800"/><path d="M0 4h24v17a3 3 0 0 1-3 3H3a3 3 0 0 1-3-3z" fill="url(#gStore)"/><path d="M7 9h4.500v4.500H7z" fill="#f25022"/><path d="M12.500 9H17v4.500h-4.500z" fill="#7fba00"/><path d="M7 14.500h4.500V19H7z" fill="#00a4ef"/><path d="M12.500 14.500H17V19h-4.500z" fill="#ffb900"/></symbol>
  <symbol id="cmd" viewBox="0 0 24 20"><rect width="24" height="20" rx="1" fill="#a7abb0"/><rect x="1" y="2" width="22" height="17" fill="#0a0a0a"/><text x="2.500" y="7" font-size="5" fill="#ddd">C:\_</text></symbol>
  <symbol id="notepad" viewBox="0 0 24 28"><path d="M2 3h20v21H2z" fill="#3fbcd9"/><path d="M2 24h20v3H2z" fill="#b45f12"/><path d="M2 23h20v2H2z" fill="#f5efe0"/><path d="M4 0v5M8 0v5M12 0v5M16 0v5M20 0v5" stroke="#0c6a88" stroke-width="1.800"/><path d="M6 9h12M6 13h12M6 17h12" stroke="#146f8e" stroke-width="1.500"/></symbol>
  <symbol id="calc" viewBox="0 0 24 28"><rect x="2" width="20" height="28" rx="2" fill="#6b7681"/><path d="M4 3h16v5H4z" fill="#3ccdf4"/><path d="M4 10h4v4H4zM10 10h4v4h-4zM16 10h4v4h-4zM4 16h4v4H4zM10 16h4v4h-4zM4 22h4v4H4zM10 22h4v4h-4z" fill="#e8ebee"/><path d="M16 16h4v10h-4z" fill="#123d80"/></symbol>
  <symbol id="brief" viewBox="0 0 16 12"><rect y="2" width="16" height="10" rx="1" fill="#c97b12"/><path d="M5 2V0h6v2M0 7h16" fill="none" stroke="#7a4300"/><path d="M7 6h2v2H7z" fill="#fce38a"/></symbol>
  <symbol id="outlook" viewBox="0 0 24 24"><path d="M7 1h16v13H7z" fill="#1a8ad8"/><path d="M15 1h8v7h-8z" fill="#50c8f4"/><path d="M7 1h8v7H7z" fill="#0d62b4"/><path d="M7 12l8 5 9-5v11H7z" fill="#2ba0ea"/><path d="M24 12L9 23h15z" fill="#54c5f5"/><rect y="7" width="13" height="13" rx="1" fill="#0f58ad"/><ellipse cx="6.500" cy="13.500" rx="3" ry="3.500" fill="none" stroke="#fff" stroke-width="1.800"/></symbol>
  <symbol id="sap" viewBox="0 0 30 18"><path d="M3 0h27L21 18H3l1-4h10l4-9H2z" fill="#426f9f"/><path d="M1 6h16l-3 7H1z" fill="#f4a914"/></symbol>
  <symbol id="weather" viewBox="0 0 36 40"><circle cx="16" cy="17" r="15" fill="url(#gSun)"/><path d="M8 38a7 7 0 0 1-1-13 9 9 0 0 1 17-2 7.500 7.500 0 0 1 4 15z" fill="url(#gCloud)"/></symbol>
  <symbol id="cloudoff" viewBox="0 0 24 20"><path d="M6 17a5 5 0 0 1-1-9.500 7 7 0 0 1 13-1A5.500 5.500 0 0 1 18 17z" fill="#d5d5d8" stroke="#333" stroke-width="1.300"/><path d="M2 1l20 18" stroke="#222" stroke-width="1.500"/></symbol>
  <symbol id="wifi" viewBox="0 0 24 20"><g fill="none" stroke="currentColor" stroke-width="1.600"><path d="M1 7a16 16 0 0 1 22 0M4.500 11a11 11 0 0 1 15 0M8 15a6 6 0 0 1 8 0"/></g><circle cx="12" cy="18" r="2" fill="currentColor"/></symbol>
  <symbol id="vol" viewBox="0 0 24 20"><g fill="none" stroke="currentColor" stroke-width="1.500"><path d="M1 7h4l5-5v16l-5-5H1zM13 7c2 2 2 4 0 6M16 4c4 4 4 8 0 12"/><path d="M19 2c5 5 5 11 0 16" opacity=".45"/></g></symbol>
  <symbol id="bat" viewBox="0 0 26 20"><rect x="2" y="5" width="20" height="13" rx="3" fill="none" stroke="currentColor" stroke-width="1.700"/><path d="M5 8h14v7H5zM23 9h2v5h-2z" fill="currentColor"/><path d="M6 0L2 7h5l-1 5 5-8H6z" fill="currentColor" stroke="#dfe0ea"/></symbol>
  <symbol id="bell" viewBox="0 0 22 24"><path d="M11 1c5 0 7 3 7 7v6l3 4H1l3-4V8c0-4 2-7 7-7zM8 20h6c0 4-6 4-6 0z" fill="currentColor"/></symbol>
  <symbol id="mic" viewBox="0 0 16 24"><rect x="4.500" y="1" width="7" height="13" rx="3.500" fill="#a9c8f5" stroke="#2b66b8" stroke-width="1.300"/><path d="M1.500 11c0 8 13 8 13 0M8 17v6" fill="none" stroke="#2b66b8" stroke-width="1.500"/></symbol>
  <symbol id="link" viewBox="0 0 20 20"><path d="M6 12L14 3c2-3 6 0 4 3l-7 8M9 16c-2 4-6 3-7 1s2-6 5-5 4 8 7 5" fill="none" stroke="#333" stroke-width="1.300"/></symbol>
</svg>

<div class="backdrop" aria-hidden="true"><span class="backdrop-rail"></span></div>

<main class="window">
  <header class="titlebar">
    <svg class="i26"><use href="#teams"/></svg>
    <h1>Session invite- SAP Ui5/Fiori Sep 26th Batch1 BLR</h1>
    <div class="win-controls">
      <button class="win-more" aria-label="More options"><svg class="i22"><use href="#dots"/></svg></button>
      <button aria-label="Minimize"><svg class="i16"><use href="#min"/></svg></button>
      <button aria-label="Maximize"><svg class="i16"><use href="#max"/></svg></button>
      <button aria-label="Close"><svg class="i16"><use href="#x"/></svg></button>
    </div>
  </header>

  <nav class="callbar">
    <svg class="i24 shield"><use href="#shield"/></svg>
    <span class="timer">23:23</span>
    <div class="call-tools">
      <button><svg class="i28"><use href="#popout"/></svg><span>Pop out</span></button>
      <button><svg class="i28"><use href="#chat"/></svg><span>Chat</span></button>
      <button><span class="people"><svg class="i28"><use href="#person"/></svg><b>37</b></span><span>People</span></button>
      <button><svg class="i28"><use href="#hand"/></svg><span>Raise</span></button>
      <button><svg class="i28"><use href="#smile"/></svg><span>React</span></button>
      <button><svg class="i28"><use href="#grid"/></svg><span>View</span></button>
      <button class="selected"><svg class="i28"><use href="#notes"/></svg><span>Notes</span></button>
      <button><svg class="i28"><use href="#apps"/></svg><span>Apps</span></button>
      <button><svg class="i28"><use href="#dots"/></svg><span>More</span></button>
    </div>
    <div class="devices">
      <button><svg class="i30"><use href="#camoff"/></svg><span>Camera</span></button>
      <button class="drop" aria-label="Camera options"><svg class="i16"><use href="#down"/></svg></button>
      <button><svg class="i30"><use href="#micoff"/></svg><span>Mic</span></button>
      <button class="drop" aria-label="Mic options"><svg class="i16"><use href="#down"/></svg></button>
      <button><svg class="i30"><use href="#shareup"/></svg><span>Share</span></button>
    </div>
    <button class="leave"><svg><use href="#hang"/></svg>Leave</button>
  </nav>

  <div class="content">
    <section class="stage">
      <div class="strip">
        <button class="pager" aria-label="Previous" disabled><svg><use href="#left"/></svg></button>
        <div class="tile t1"><span class="avatar blue">DN</span><span class="muted"><svg><use href="#micoff"/></svg></span></div>
        <div class="tile t2"><span class="avatar gold">CK</span><span class="muted"><svg><use href="#micoff"/></svg></span></div>
        <div class="tile t3"><span class="avatar gold">D</span></div>
        <div class="tile t4"><span class="avatar gold">SR</span><span class="muted"><svg><use href="#micoff"/></svg></span></div>
        <div class="tile t5"><span class="avatar plum">MA</span><span class="muted"><svg><use href="#micoff"/></svg></span></div>
        <div class="tile t6"><span class="avatar peach">RM</span><span class="muted"><svg><use href="#micoff"/></svg></span></div>
        <div class="tile t7"><span class="avatar plum">AM</span><span class="muted"><svg><use href="#micoff"/></svg></span></div>
        <button class="pager" aria-label="Next"><svg><use href="#right"/></svg></button>
        <div class="tile t8"><span class="avatar peach">DC</span><span class="muted"><svg><use href="#micoff"/></svg></span></div>
      </div>

      <div class="share">
        <div class="ppt">
          <div class="ppt-title">
            <div class="qat">
              <svg class="w16"><use href="#pplogo"/></svg><svg class="w14"><use href="#save"/></svg>
              <svg class="w14"><use href="#undo"/></svg><svg class="w14"><use href="#redo"/></svg><svg class="w16"><use href="#play"/></svg><svg class="w14"><use href="#draw"/></svg><svg class="w14"><use href="#tabledraw"/></svg><svg class="caret"><use href="#caret"/></svg>
            </div>
            <div class="ppt-name">Presentation_capjemini.pptx -&nbsp; PowerPoint (Product Activation Failed)</div>
            <div class="ppt-controls"><span>?</span><svg viewBox="0 0 14 12"><path d="M.5.500h13v11H.5zM7 10V3M4.500 5.500L7 3l2.500 2.500" fill="none" stroke="#666"/></svg><svg viewBox="0 0 14 12"><path d="M1 9.500h11" stroke="#666" stroke-width="2"/></svg><svg viewBox="0 0 14 12"><path d="M3 3V.500h9v6H9.500M.5 3.500h9v7h-9z" fill="none" stroke="#666"/></svg><svg viewBox="0 0 14 12"><path d="M2 1l9 10M11 1L2 11" stroke="#444" stroke-width="2"/></svg></div>
          </div>
          <div class="tabs">
            <button class="file">FILE</button><button class="home">HOME</button><button>INSERT</button><button>DESIGN</button><button>TRANSITIONS</button><button>ANIMATIONS</button><button>SLIDE SHOW</button><button>REVIEW</button><button>VIEW</button>
          </div>
          <div class="ribbon">
            <div class="group">
              <div class="group-body">
                <button class="big off"><svg class="w28"><use href="#paste"/></svg><span>Paste</span><svg class="caret"><use href="#caret"/></svg></button>
                <div class="rows">
                  <button><svg class="w14"><use href="#cut"/></svg>Cut</button>
                  <button><svg class="w14"><use href="#copy"/></svg>Copy<svg class="caret"><use href="#caret"/></svg></button>
                  <button><svg class="w14"><use href="#brush"/></svg>Format Painter</button>
                </div>
              </div>
              <div class="group-label">Clipboard<svg><use href="#launch"/></svg></div>
            </div>
            <div class="group">
              <div class="group-body g-slides">
                <button class="big"><svg class="w28"><use href="#newslide"/></svg><span>New</span><span>Slide <svg class="caret"><use href="#caret"/></svg></span></button>
                <div class="rows">
                  <button><svg class="w16"><use href="#layout"/></svg>Layout<svg class="caret"><use href="#caret"/></svg></button>
                  <button><svg class="w16"><use href="#reset"/></svg>Reset</button>
                  <button><svg class="w16"><use href="#section"/></svg>Section<svg class="caret"><use href="#caret"/></svg></button>
                </div>
              </div>
              <div class="group-label">Slides</div>
            </div>
            <div class="group off">
              <div class="group-body g-font">
                <div class="line">
                  <span class="combo face"><select aria-label="Font" disabled><option></option></select><svg class="caret"><use href="#caret"/></svg></span><span class="combo size"><select aria-label="Font size" disabled><option>20+</option></select><svg class="caret"><use href="#caret"/></svg></span>
                  <button class="grow">A<svg class="caret flip"><use href="#caret"/></svg></button><button class="shrink">A<svg class="caret"><use href="#caret"/></svg></button><i class="bar"></i><svg class="w14"><use href="#eraseA"/></svg>
                </div>
                <div class="line marks">
                  <button><b>B</b></button><button><i>I</i></button><button><u>U</u></button><button><b>S</b></button><button class="small"><s>abc</s></button><button class="small"><u>AV</u><svg class="caret"><use href="#caret"/></svg></button><button>Aa<svg class="caret"><use href="#caret"/></svg></button><i class="bar"></i><button>A</button><svg class="caret"><use href="#caret"/></svg>
                </div>
              </div>
              <div class="group-label">Font<svg><use href="#launch"/></svg></div>
            </div>
            <div class="group off">
              <div class="group-body g-para">
                <div class="para-tools">
                  <div class="line"><svg class="w15"><use href="#bullets"/></svg><svg class="caret"><use href="#caret"/></svg><svg class="w15"><use href="#numbers"/></svg><svg class="caret"><use href="#caret"/></svg><i class="bar"></i><svg class="w15"><use href="#outdent"/></svg><svg class="w15"><use href="#indent"/></svg><i class="bar"></i><svg class="w15"><use href="#spacing"/></svg><svg class="caret"><use href="#caret"/></svg></div>
                  <div class="line"><svg class="w14"><use href="#al1"/></svg><svg class="w14"><use href="#al2"/></svg><svg class="w14"><use href="#al3"/></svg><svg class="w14"><use href="#al4"/></svg><i class="bar"></i><svg class="w14"><use href="#cols"/></svg><svg class="caret"><use href="#caret"/></svg></div>
                </div>
                <div class="rows">
                  <button><svg class="w16"><use href="#tdir"/></svg>Text Direction<svg class="caret"><use href="#caret"/></svg></button>
                  <button><svg class="w16"><use href="#atext"/></svg>Align Text<svg class="caret"><use href="#caret"/></svg></button>
                  <button><svg class="w16"><use href="#smart"/></svg>Convert to SmartArt<svg class="caret"><use href="#caret"/></svg></button>
                </div>
              </div>
              <div class="group-label">Paragraph<svg><use href="#launch"/></svg></div>
            </div>
            <div class="group">
              <div class="group-body g-draw">
                <div class="gallery">
                  <svg viewBox="0 0 120 58"><g fill="none" stroke="#777"><rect x="3.500" y="3.500" width="14" height="12"/><path d="M11 6h5M11 8.500h5M5 11h11M5 13h11M24 4l13 12M44 4l13 12M57 16v-3M57 16h-3"/><rect x="63.500" y="4.500" width="14" height="10"/><ellipse cx="90.500" cy="9.500" rx="7" ry="5.500"/><rect x="103.500" y="4.500" width="14" height="10" rx="2.500"/><path d="M10.500 23l6 13h-12zM24 24h6v11h7M44 24h6v11h7M55 33l2 2-2 2M63 27h7v-4l7 6-7 6v-4h-7zM87 23h6v6h4l-6.500 7-6.500-7h3zM104 36V27l5-4h5c-3 5 3 5 3 8v5zM6 44c8-5 7 0 2 3s2 4 5 1-2 6 0 7 4-1 3-3M24 43c8 0 13 5 13 13M43 54c5 0 4-11 8-11s2 11 8 11M72 43c-4 0-1 6-5 6 4 0 1 6 5 6M88 43c4 0 1 6 5 6-4 0-1 6-5 6M110 42l2 5h5l-4 4 2 5-5-3-5 3 2-5-4-4h5z"/></g><path d="M5 9l2-5 2 5M6 7.500h2" fill="none" stroke="#2b579a"/></svg>
                  <div class="gallery-nav"><svg class="caret flip"><use href="#caret"/></svg><svg class="caret"><use href="#caret"/></svg><svg class="caret"><use href="#caret"/></svg></div>
                </div>
                <button class="big"><svg class="w28"><use href="#arrange"/></svg><span>Arrange</span><svg class="caret"><use href="#caret"/></svg></button>
                <button class="big off"><svg class="w28"><use href="#quick"/></svg><span>Quick</span><span>Styles <svg class="caret"><use href="#caret"/></svg></span></button>
                <div class="rows off">
                  <button><svg class="w14"><use href="#fill"/></svg>Shape Fill<svg class="caret"><use href="#caret"/></svg></button>
                  <button><svg class="w14"><use href="#outline"/></svg>Shape Outline<svg class="caret"><use href="#caret"/></svg></button>
                  <button><svg class="w14"><use href="#effects"/></svg>Shape Effects<svg class="caret"><use href="#caret"/></svg></button>
                </div>
              </div>
              <div class="group-label">Drawing<svg><use href="#launch"/></svg></div>
            </div>
            <div class="group">
              <div class="group-body">
                <div class="rows">
                  <button><svg class="w14"><use href="#find"/></svg>Find</button>
                  <button><svg class="w14" viewBox="0 0 14 14"><text x="0" y="6" font-size="7" fill="#444">ab</text><text x="5" y="13" font-size="7" fill="#2b6cb0">ac</text></svg>Replace<svg class="caret"><use href="#caret"/></svg></button>
                  <button><svg class="w14"><use href="#arrowptr"/></svg>Select<svg class="caret"><use href="#caret"/></svg></button>
                </div>
              </div>
              <div class="group-label">Editing</div>
            </div>
          </div>

          <div class="ppt-body">
            <ol class="thumbs">
              <li><span>4</span><svg viewBox="0 0 125 70"><path d="M11 0v57h86V0" fill="none" stroke="#41719c"/><path d="M11 0h38v4H11z" fill="#ffc000"/><path d="M1 9h33v5H1zM1 25h28v4H1zM1 36h31v2H1zM1 44h31v5H1z" fill="#00a651"/><path d="M11 61h87v6H11z" fill="#5b9bd5"/><g font-size="3"><text x="12" y="20" fill="#333">https://tools.hana.ondemand.com/additional tool for</text><text x="37" y="26" fill="#1155cc">developer/toolspec_java501</text><text x="31" y="31" fill="#1155cc">https://nodejs.org/en/download</text><text x="31" y="41" fill="#1155cc">code editor app</text><text x="17" y="52" fill="#333">https://support/tools/tea setup guide html website</text><text x="31" y="65" fill="#111">Cloud platform: https://account.hana</text></g></svg></li>
              <li><span>5</span><svg viewBox="0 0 125 70"><path d="M0 1h45v7H0z" fill="#ffc000"/><text x="2" y="6" font-size="4" fill="#333">Website installation</text><path d="M94 9l11-1V4h13v5z" fill="#fff" stroke="#41719c"/><g font-size="3" fill="#1155cc" text-decoration="underline"><text x="6" y="11.500">https://www.youtube.com/watch?v=tutorial/installation/css/playlist</text><text x="6" y="15.500">code_product_download.html</text><text x="3" y="25.500">https://drive.google.com/file/d/1BsW0bKQY7hBLVXHPmW/view</text><text x="3" y="29.500">MJhPm6/view?usp=share_link</text></g><text x="6" y="20" font-size="3" fill="#333">Website socket</text><path d="M5 70v-6h18v6" fill="none" stroke="#41719c"/></svg></li>
              <li><span>6</span><svg viewBox="0 0 125 70"><path d="M0 1h61v5.500H0z" fill="#ffc000"/><text x="2" y="5.500" font-size="5" fill="#333">Certain confusing terms</text><g font-size="3" fill="#444"><text x="2" y="11">• Elements</text><text x="2" y="15">• Tags</text><text x="2" y="18.500">• Controls</text><text x="2" y="22.500">• Objects</text><text x="2" y="26">• Class</text><text x="2" y="30">• Inheritable/instance</text></g><g font-size="4" fill="#111"><text x="2" y="34.500">When you use the <tspan fill="#e33">sap.m.Button class</tspan> to create a <tspan fill="#e33">button</tspan></text><text x="2" y="38.500"><tspan fill="#e33">control</tspan> then you are using the <tspan fill="#c33">button class</tspan> to create the</text><text x="2" y="42.500"><tspan fill="#e33">button control</tspan>. Now when you create an <tspan fill="#e33">instance</tspan> of button</text><text x="2" y="46.500">it becomes an <tspan fill="#e33">object</tspan></text></g></svg></li>
              <li><span>7</span><svg viewBox="0 0 125 70"><text x="10" y="12" font-size="5.500" fill="#555">html</text><g font-size="3.500" fill="#555"><text x="10" y="19">• Html = hypertext markup language</text><text x="10" y="24">• Why markup? Because you write the code and get it</text><text x="10" y="29">• Who created html = w3c</text><text x="10" y="44">1989 -2014....2017 (HTML5)&nbsp; The html 5 is the latest version</text></g><path d="M8 34h20v6H8z" fill="#c55a11"/><g font-size="3" fill="#111"><text x="8" y="52" fill="#1f4e9c">What is the difference b/w the html 4 and ui5</text><text x="8" y="56">UI5 is a framework</text><text x="8" y="60">Html5 is a markup language. This the latest edition</text></g></svg></li>
              <li class="current"><span>8</span><svg viewBox="0 0 125 70"><g font-size="3.500" fill="#555"><text x="10" y="5">Any html page is also called as html document.</text><text x="5" y="10">Why a document? <tspan fill="#f2b84a">Because it has got a head and body</tspan></text></g><g font-size="2.500" fill="#f29b4a"><text x="2" y="21">Syntax for writing html</text><text x="2" y="25">&lt;tagname prop="val"&gt;&lt;/tagName&gt;</text><text x="2" y="35">Bear in Mind</text></g><g font-size="2.500" fill="#333"><text x="2" y="39.500">• Html is not case sensitive</text><text x="2" y="43.500">• MOST Html tags have got start and end tag</text><text x="2" y="47">• Browser directly understand html</text><text x="2" y="51">• Html has got tree data structure called DOM (Document object</text><text x="5" y="54">a way to represent and manipulate the structure</text><text x="5" y="57">programmatically)</text></g><path d="M88 14h37v46H88z" fill="#5b9bd5"/><path d="M91 18h33v15H91zM91 36h33v15H91z"/><g font-size="3" fill="#fff"><text x="92" y="26">head</text><text x="92" y="44">body</text></g></svg></li>
              <li><span>9</span><svg viewBox="0 0 125 70"><path d="M0 1h58v9H0z" fill="#ffc000"/><text x="2" y="7.500" font-size="5" fill="#333">HTML HEAD meta tag</text><path d="M103 3h21v17h-13l-6 15v-15h-2z" fill="#d5d9dd" stroke="#5b87ad"/><g font-size="2.500" fill="#222"><text x="106" y="9">This meta tag</text><text x="109" y="13">used for</text><text x="10" y="22">&lt;head&gt;</text><text x="12" y="26">&lt;meta charset="UTF-8"&gt;</text><text x="12" y="29.500">&lt;meta name="description" content="Free Web tutorials"&gt;</text><text x="12" y="33">&lt;meta name="keywords" content="HTML, CSS, JavaScript"&gt;</text></g></svg></li>
            </ol>
            <div class="scroll"><span class="scroll-btn"><svg class="caret flip"><use href="#caret"/></svg></span><span class="scroll-thumb"></span><span class="scroll-btn end"><svg class="caret"><use href="#caret"/></svg></span></div>
            <div class="canvas">
              <article class="slide">
                <div class="slide-text">
                  <p class="slide-title">Any html page is also called as html document.<br>Why a document? <em>Because it has got a head and body</em></p>
                  <p class="syntax">Syntax for writing&nbsp; html<br>&lt;<u>tagname</u>&nbsp; prop=“<u>val</u>”&gt;&lt;/<u>tagName</u>&gt;<svg class="ibeam" viewBox="0 0 10 20"><path d="M1 1h3l1 1 1-1h3M5 2v16M1 19h3l1-1 1 1h3" fill="none" stroke="#111" stroke-width="1.500"/></svg></p>
                  <h2>Bear in Mind</h2>
                  <ul>
                    <li>Html is not case sensitive</li>
                    <li>MOST Html tags have got start and end tag</li>
                    <li>Browser directly understand html</li>
                    <li>Html has got tree data structure called <b>DOM</b> (Document object Model- it is a way to represent and manipulate the structure of a web page programmatically)</li>
                  </ul>
                </div>
                <div class="page-box"><div>head</div><div>body</div></div>
              </article>
            </div>
          </div>
          <div class="status"><span>SLIDE 8 OF 95</span><svg class="w16"><use href="#book"/></svg><span>ENGLISH (INDIA)</span></div>
        </div>

        <div class="remote-bar">
          <div class="remote-start"><svg class="i28"><use href="#weather"/></svg></div>
          <div class="remote-apps">
            <span><svg class="i22"><use href="#win"/></svg></span>
            <span><svg class="i22"><use href="#search"/></svg></span>
            <span><svg class="i22"><use href="#taskview"/></svg></span>
            <span><svg class="i24"><use href="#gear"/></svg></span>
            <span><svg class="i24"><use href="#copilot"/></svg></span>
            <span><svg class="i24"><use href="#teams"/></svg></span>
            <span><svg class="i24"><use href="#edge"/></svg></span>
            <span class="run"><svg class="i24"><use href="#folder"/></svg></span>
            <span><svg class="i22"><use href="#m365"/></svg></span>
            <span class="run"><svg class="i24"><use href="#chrome"/></svg></span>
            <span class="run"><svg class="i24"><use href="#wboard"/></svg></span>
            <span class="run active"><svg class="i22"><use href="#ppt"/></svg></span>
            <span class="run"><svg class="i24"><use href="#zoom"/></svg></span>
            <span class="run"><svg class="i24"><use href="#vscode"/></svg></span>
          </div>
          <div class="remote-tray">
            <svg class="i12"><use href="#up"/></svg><svg class="i16"><use href="#mic"/></svg><svg class="i16"><use href="#link"/></svg>
            <span class="lang">ENG<br>IN</span>
            <span class="net"><svg class="i16"><use href="#wifi"/></svg><svg class="i16"><use href="#vol"/></svg><svg class="i16"><use href="#bat"/></svg></span>
            <span class="clock">14:27<br>04-11-2024</span>
            <svg class="i16"><use href="#bell"/></svg>
          </div>
        </div>

        <div class="zoom-dock">
          <div class="share-pill">
            <div class="share-msg"><svg viewBox="0 0 12 12"><path d="M6 11C3 9 2 7 2 4L0 4l4-4 3 4H5c0 3 1 5 4 7z" fill="#145c20"/></svg><span>You are screen sharing</span><svg viewBox="0 0 16 14"><path d="M0 4h4l4-4v14l-4-4H0z" fill="#145c20"/><path d="M10 4c2 2 2 4 0 6M13 2c3 3 3 7 0 10" fill="none" stroke="#145c20" stroke-width="1.500"/></svg><svg viewBox="0 0 12 14"><path d="M6 0l6 2v5c0 4-3 6-6 7-3-1-6-3-6-7V2z" fill="#145c20"/><path d="M3.500 7l2 2 3-4" fill="none" stroke="#23d959" stroke-width="1.500"/></svg></div>
            <div class="elapsed"><svg class="i12" viewBox="0 0 12 12"><path d="M6 .700a5.300 5.300 0 1 1 0 10.600A5.300 5.300 0 0 1 6 .7M6 3v3.500l2 1" fill="none" stroke="#ddd"/></svg>00:19:36<svg class="i8"><use href="#down"/></svg></div>
            <button class="stop">Stop share</button>
          </div>
          <div class="zoom-bar">
            <button class="z-audio"><svg><use href="#zmic"/></svg><svg class="chev"><use href="#down"/></svg><span>Audio</span></button>
            <button class="z-video"><svg><use href="#zvid"/></svg><span>Video</span></button>
            <button class="z-people"><svg><use href="#zppl"/></svg><sup>1</sup><svg class="chev"><use href="#down"/></svg><span>Participants</span></button>
            <button class="z-chat"><svg><use href="#zchat"/></svg><svg class="chev"><use href="#down"/></svg><span>Chat</span></button>
            <button class="z-share"><svg><use href="#zshare"/></svg><svg class="chev"><use href="#down"/></svg><span>Share</span></button>
            <button class="z-pause"><svg><use href="#zpause"/></svg><span>Pause</span></button>
            <button class="z-note"><svg><use href="#zpen"/></svg><span>Annotate</span></button>
            <button class="z-show"><svg><use href="#zshow"/></svg><span>Show meeting</span></button>
            <button class="z-more"><svg><use href="#zmore"/></svg><span>More</span></button>
          </div>
        </div>

        <div class="annotate">
          <button class="on" aria-label="Mouse"><svg><use href="#ptr"/></svg></button>
          <button aria-label="Select"><svg><use href="#move"/></svg></button>
          <button aria-label="Text"><svg><use href="#ttool"/></svg></button>
          <button aria-label="Draw"><svg><use href="#pen"/></svg></button>
          <button aria-label="Stamp"><svg><use href="#check"/></svg></button>
          <button aria-label="Spotlight"><svg><use href="#spot"/></svg></button>
          <button aria-label="Eraser"><svg><use href="#eraser"/></svg></button>
          <button aria-label="Colour"><svg><use href="#ink"/></svg></button>
          <button aria-label="Undo"><svg><use href="#aundo"/></svg></button>
          <button class="dim" aria-label="Redo"><svg><use href="#aredo"/></svg></button>
          <button aria-label="Clear"><svg><use href="#trash"/></svg></button>
          <button aria-label="Save"><svg><use href="#dl"/></svg></button>
          <hr>
          <button class="wide" aria-label="More"><svg><use href="#bigdots"/></svg></button>
          <button aria-label="Privacy"><svg><use href="#pshield"/></svg></button>
          <button class="quit" aria-label="Close annotation"><svg><use href="#x"/></svg></button>
        </div>
      </div>
      <div class="presenter">danish (Unverified)</div>
    </section>

    <aside class="notes">
      <div class="notes-head"><h2>Meeting notes</h2><button aria-label="Close notes"><svg class="i18"><use href="#x"/></svg></button></div>
      <div class="notes-tools">
        <svg class="i26"><use href="#loop"/></svg>
        <svg class="faces" viewBox="0 0 42 42"><circle cx="21" cy="21" r="19.500" fill="#fff" stroke="url(#gRing)" stroke-width="3"/><path d="M19 6v30a15 15 0 0 1 0-30z" fill="#bcd797"/><path d="M22 6c8 0 12 5 14 13H22z" fill="#8ecb8e"/><path d="M22 22h14c-1 8-6 13-14 14z" fill="#d9a3df"/><text x="4" y="25" font-size="10" fill="#374a14">MD</text><text x="23" y="17" font-size="8" fill="#174a17">BR</text><text x="23" y="31" font-size="8" fill="#5a1d63">SA</text></svg>
        <button aria-label="More note options"><svg class="i22"><use href="#dots"/></svg></button>
      </div>
      <h3>Agenda</h3>
      <label class="note-row"><input type="checkbox"><span>Topic, @name, time allotted</span></label>
      <h3>Meeting notes</h3>
      <ul class="note-list"><li>Add meeting notes</li></ul>
      <h3>Follow-up tasks</h3>
      <button class="add-task"><svg class="i22"><use href="#plus"/></svg>Add task</button>
    </aside>
  </div>
</main>

<footer class="taskbar">
  <div class="task-start"><svg><use href="#weather"/></svg><span>1</span></div>
  <div class="task-apps">
    <button aria-label="Start"><svg class="i36"><use href="#win"/></svg></button>
    <button aria-label="Search"><svg class="i34"><use href="#search"/></svg></button>
    <button aria-label="Task view"><svg class="i36"><use href="#taskview"/></svg></button>
    <button class="run" aria-label="File Explorer"><svg class="i36"><use href="#folder"/></svg></button>
    <button aria-label="Store"><svg class="i36"><use href="#store"/></svg></button>
    <button aria-label="Command Prompt"><svg class="i34"><use href="#cmd"/></svg></button>
    <button aria-label="Notepad"><svg class="i36"><use href="#notepad"/></svg></button>
    <button aria-label="Calculator"><svg class="i36"><use href="#calc"/></svg></button>
    <button class="run" aria-label="Edge"><svg class="i36"><use href="#edge"/></svg><svg class="brief"><use href="#brief"/></svg></button>
    <button class="run" aria-label="Outlook"><svg class="i36"><use href="#outlook"/></svg></button>
    <button aria-label="SAP Logon"><svg class="i36"><use href="#sap"/></svg></button>
    <button class="run active" aria-label="Teams"><svg class="i36"><use href="#teams"/></svg><i class="rec"></i></button>
    <button class="run" aria-label="VS Code"><svg class="i36"><use href="#vscode"/></svg></button>
    <button class="run" aria-label="Settings"><svg class="i36"><use href="#gear"/></svg></button>
  </div>
  <div class="tray">
    <svg class="i16"><use href="#up"/></svg>
    <svg class="i26"><use href="#cloudoff"/></svg>
    <span class="tray-mic"><svg class="i24"><use href="#micoff"/></svg></span>
    <span class="lang">ENG<br>IN</span>
    <span class="net"><svg class="i24"><use href="#wifi"/></svg><svg class="i24"><use href="#vol"/></svg><svg class="i24"><use href="#bat"/></svg></span>
    <time class="clock">14:27<br>04-11-2024</time>
    <svg class="i22 bell"><use href="#bell"/></svg>
  </div>
</footer>
</body>
</html>
```

FILE: styles.css
```css
* { box-sizing: border-box; }
html, body { height: 100%; }
body {
  margin: 0;
  display: flex;
  flex-direction: column;
  font-family: "Open Sans", "Noto Sans", sans-serif;
  font-size: 15px;
  color: #242424;
  background: #c3c3c3;
  overflow: hidden;
}
button { font: inherit; color: inherit; background: none; border: 0; padding: 0; margin: 0; }
h1, h2, h3, p, ul, ol { margin: 0; padding: 0; font-weight: 400; }
ol, ul { list-style: none; }
svg { display: block; flex: none; overflow: visible; }
.defs { position: absolute; width: 0; height: 0; }
.i8 { width: 8px; height: 8px; }
.i12 { width: 12px; height: 12px; }
.i16 { width: 16px; height: 16px; }
.i18 { width: 18px; height: 18px; }
.i22 { width: 22px; height: 22px; }
.i24 { width: 24px; height: 24px; }
.i26 { width: 26px; height: 26px; }
.i28 { width: 28px; height: 28px; }
.i30 { width: 30px; height: 30px; }
.i34 { width: 34px; height: 34px; }
.i36 { width: 36px; height: 36px; }
.w14 { width: 14px; height: 14px; }
.w15 { width: 15px; height: 15px; }
.w16 { width: 16px; height: 16px; }
.w28 { width: 28px; height: 28px; }
.caret { width: 6px; height: 6px; }
.flip { transform: rotate(180deg); }

/* desktop behind the call window */
.backdrop { position: absolute; inset: 0; z-index: -1; background: linear-gradient(#cfcfcf 71px, #bcbcbc 71px, #bcbcbc 72px, #c9c9c9 72px, #b4b4b4 800px, #999); }
.backdrop-rail { position: absolute; left: 3px; top: 162px; width: 3px; height: 72px; border-radius: 2px; background: #4b4fb0; }

.window {
  flex: 1;
  min-height: 0;
  margin: 1px 9px 11px 10px;
  display: flex;
  flex-direction: column;
  border: 1px solid #8a8a8a;
  border-width: 1px 2px 2px 1px;
  border-radius: 12px;
  background: #f4f4f4;
  overflow: hidden;
  box-shadow: 0 4px 8px rgba(0, 0, 0, .25);
}
.titlebar { flex: none; height: 46px; display: flex; align-items: center; gap: 10px; padding: 0 0 2px 17px; background: #ebebeb; border-bottom: 1px solid #d9d9d9; }
.titlebar h1 { font-size: 17px; line-height: 24px; }
.win-controls { margin-left: auto; display: flex; align-items: center; color: #555; }
.win-controls button { width: 66px; height: 30px; display: grid; place-items: center; }
.win-controls .win-more { width: 48px; margin-right: 9px; border-right: 1px solid #dedede; }

.callbar { flex: none; height: 91px; display: flex; align-items: center; padding-left: 23px; padding-right: 29px; background: #fff; border-bottom: 1px solid #dadada; box-shadow: 0 1px 3px rgba(0, 0, 0, .08); z-index: 1; }
.timer { margin-left: 20px; font-size: 19px; color: #424242; }
.call-tools { margin-left: auto; display: flex; align-self: stretch; color: #424242; padding-right: 12px; }
.call-tools button { width: 84px; display: flex; flex-direction: column; align-items: center; gap: 9px; padding-top: 19px; line-height: 22px; }
.people { display: flex; align-items: center; gap: 3px; height: 28px; font-size: 18px; }
.people b { font-weight: 600; }
.call-tools .selected { background: linear-gradient(#5b5fc7, #5b5fc7) center 85px / 70px 4px no-repeat; }
.devices { display: flex; align-self: center; height: 48px; border-left: 2px solid #d4d4d4; padding-left: 18px; }
.devices button { width: 72px; margin-top: -3px; display: flex; flex-direction: column; align-items: center; gap: 8px; line-height: 22px; }
.devices .drop { width: 36px; margin-right: 6px; padding-top: 21px; }
.leave { margin-left: 20px; width: 137px; height: 48px; border-radius: 5px; background: #d13438; color: #fff; font-size: 19px; font-weight: 600; display: flex; align-items: center; justify-content: center; gap: 12px; }
.leave svg { width: 29px; height: 14px; }

.content { flex: 1; min-height: 0; display: flex; }
.stage { flex: 1; min-width: 0; position: relative; display: flex; flex-direction: column; gap: 6px; padding: 6px 69px 4px; }
.strip { flex: none; height: 129px; display: grid; grid-template-columns: 48px repeat(7, 128fr) 48px 234fr; gap: 6px; }
.pager { margin: 2px 0; background: #fff; border-radius: 5px; display: grid; place-items: center; }
.pager svg { width: 16px; height: 24px; }
.pager:disabled { color: #b5b5b5; }
.tile { position: relative; display: grid; place-items: center; border: 1px solid #d5d8dc; border-radius: 7px; }
.t1 { background: linear-gradient(150deg, #eaf0f6, #f1f2f6 60%, #efe9f3); }
.t2 { background: linear-gradient(115deg, #e3f3f2, #ddeef4 40%, #f1ebf1 75%, #f1f1f4); }
.t3 { background: linear-gradient(160deg, #dfe6f3, #dbedee 45%, #dcf1ec 70%, #e6e7f1); }
.t4 { background: linear-gradient(130deg, #f1f1e9, #e1eef2 50%, #efe9f2); }
.t5 { background: linear-gradient(145deg, #f6efe0, #f1f2f1 50%, #dff1f5); }
.t6 { background: linear-gradient(120deg, #e7f1f2, #e8f3ec 35%, #f0eff4 60%, #f2f2ee); }
.t7 { background: linear-gradient(120deg, #f4ecdc, #f0f1e9 50%, #def0f1 80%, #f1f2f0); }
.t8 { background: radial-gradient(circle at 85% 40%, #efdbf2, #f3e6f4 40%, #e9e9f3 65%, #e5f0f1); }
.avatar { width: 72px; height: 72px; border-radius: 50%; display: grid; place-items: center; font-size: 27px; font-weight: 600; box-shadow: 0 2px 5px rgba(0, 0, 0, .16); }
.blue { background: #ccdaea; color: #12345c; }
.gold { background: #f7e9cd; color: #7c5a10; }
.plum { background: #ead3e2; color: #5b1c45; }
.peach { background: #fce8d5; color: #8c561c; }
.t8 .avatar { box-shadow: none; }
.muted { position: absolute; left: 5px; bottom: 5px; width: 42px; height: 36px; border-radius: 5px; background: rgba(82, 82, 82, .78); color: #fff; display: grid; place-items: center; --cut: #767676; }
.muted svg { width: 20px; height: 20px; }

/* shared screen */
.share { flex: 1; min-height: 0; margin: 0 4px 0 3px; position: relative; display: flex; flex-direction: column; }
.ppt { flex: 1; min-height: 0; display: flex; flex-direction: column; background: #fdfdfd; border: 5px solid #8cc220; border-width: 2px 5px 0; font-size: 11px; line-height: 16px; color: #444; }
.ppt-title { flex: none; height: 17px; display: flex; overflow: hidden; }
.qat { width: 191px; display: flex; gap: 11px; padding-left: 2px; }
.qat svg { margin-top: -3px; }
.qat .caret { margin: 4px 0 0; }
.ppt-name { flex: 1; background: #ea1010; color: #ffe9e9; text-align: center; line-height: 13px; padding-right: 76px; }
.ppt-controls { width: 119px; display: flex; justify-content: space-between; padding: 0 1px 0 10px; line-height: 14px; font-size: 12px; font-weight: 600; }
.ppt-controls svg { width: 14px; height: 12px; }
.tabs { flex: none; height: 24px; display: flex; gap: 17px; border-bottom: 1px solid #dcdcdc; font-size: 12px; }
.tabs .file { width: 53px; background: #d04526; color: #fff; }
.tabs .home { width: 52px; margin: 0 -6px 0 -13px; color: #d04526; background: #fff; border: 1px solid #dcdcdc; border-bottom: 0; height: 24px; }
.ribbon { flex: none; height: 88px; display: flex; border-bottom: 1px solid #dcdcdc; }
.group { width: 140px; display: flex; flex-direction: column; padding: 5px 0 0 5px; border-right: 1px solid #e4e4e4; }
.group:nth-child(2) { width: 115px; }
.group:nth-child(3) { width: 198px; padding-left: 3px; }
.group:nth-child(4) { width: 285px; }
.group:nth-child(5) { width: 336px; padding-left: 4px; }
.group:nth-child(6) { width: 80px; }
.group-body { height: 67px; display: flex; gap: 6px; }
.group-label { position: relative; text-align: center; line-height: 14px; font-size: 10px; color: #666; }
.group-label svg { position: absolute; right: 4px; top: 4px; width: 7px; height: 7px; }
.off, .off button { color: #a3a3a3; }
.rows { display: flex; flex-direction: column; gap: 6px; }
.rows button { display: flex; align-items: center; gap: 4px; height: 16px; line-height: 16px; white-space: nowrap; }
.g-para .rows { font-size: 12px; }
.g-para .rows button { gap: 3px; }
.big { display: flex; flex-direction: column; align-items: center; font-size: 11px; line-height: 16px; padding-top: 2px; gap: 0; min-width: 28px; }
.big > span { display: flex; align-items: center; gap: 3px; }
.big > svg.w28 { margin-bottom: 4px; }
.g-slides .big { min-width: 34px; }
.g-slides { padding-left: 2px; gap: 5px; }
.g-font { flex-direction: column; gap: 9px; padding-top: 4px; }
.line { display: flex; align-items: center; gap: 5px; height: 22px; }
.combo { display: flex; align-items: center; height: 20px; border: 1px solid #e0e0e0; padding-right: 3px; }
.combo select { flex: 1; min-width: 0; appearance: none; border: 0; background: none; color: #a3a3a3; font: inherit; padding: 0; opacity: 1; }
.face { width: 89px; }
.size { width: 37px; margin-left: -5px; }
.line button { display: flex; align-items: center; }
.grow { font-size: 15px; font-weight: 600; }
.shrink { font-size: 13px; font-weight: 600; }
.grow .caret, .shrink .caret { margin-top: -8px; width: 5px; }
.bar { width: 1px; height: 14px; background: #ddd; }
.marks { gap: 10px; font-size: 13px; padding-left: 5px; }
.marks button { gap: 1px; }
.marks .small { font-size: 11px; }
.marks > .caret { margin-left: -6px; }
.g-para { gap: 0; }
.para-tools { width: 141px; padding-top: 4px; display: flex; flex-direction: column; gap: 9px; }
.para-tools .line { gap: 5px; }
.g-draw { gap: 5px; }
.gallery { width: 135px; height: 60px; display: flex; border: 1px solid #b5b5b5; }
.gallery > svg { width: 119px; height: 58px; }
.gallery-nav { width: 14px; border-left: 1px solid #b5b5b5; display: grid; place-items: center; }
.g-draw .rows { gap: 5px; }

.ppt-body { flex: 1; min-height: 0; display: flex; background: linear-gradient(#fdfdfd 20%, #ededed); }
.thumbs { width: 169px; overflow: hidden; padding: 18px 0 0 7px; display: flex; flex-direction: column; gap: 20px; }
.thumbs li { flex: none; display: flex; gap: 6px; height: 72px; }
.thumbs li > span { width: 9px; font-size: 16px; line-height: 10px; }
.thumbs li > svg { width: 127px; height: 72px; background: #fff; border: 1px solid #c4c4c4; overflow: hidden; }
.thumbs .current > span { color: #d04526; }
.thumbs .current > svg { outline: 2px solid #d04526; border-color: #fff; }
.scroll { width: 17px; display: flex; flex-direction: column; background: #f0f0f0; border-right: 1px solid #e4e4e4; }
.scroll-btn { width: 16px; height: 16px; border: 1px solid #ccc; background: #fff; display: grid; place-items: center; color: #666; }
.scroll-thumb { width: 16px; height: 29px; margin-top: 16px; border: 1px solid #c4c4c4; background: #fff; }
.scroll-btn.end { margin-top: auto; }
.canvas { flex: 1; display: flex; padding: 8px 105px 12px 97px; }
.slide { flex: 1; display: flex; background: #fff; border: 1px solid #d2d2d2; font-family: Lato, "Liberation Sans", sans-serif; color: #111; font-size: 15px; line-height: 20px; }
.slide-text { flex: 1; padding: 7px 0 0 13px; }
.slide-title { font-size: 24px; line-height: 36px; text-align: center; }
.slide-title em { font-style: normal; color: #f4c02c; }
.syntax { position: relative; margin-top: 46px; font-size: 17px; line-height: 30px; color: #f4c02c; }
.syntax u { text-decoration: underline wavy #e23b3b 1px; text-underline-offset: 2px; }
.ibeam { position: absolute; left: 208px; top: 42px; width: 10px; height: 20px; }
.slide h2 { margin-top: 49px; font-size: 20px; line-height: 24px; color: #f4c02c; }
.slide ul { margin-top: 8px; padding: 0 12px 0 16px; list-style: disc; display: flex; flex-direction: column; gap: 9px; font-size: 17px; }
.slide li::marker { font-size: 12px; }
.page-box { width: 263px; margin-top: 99px; height: 328px; align-self: flex-start; padding: 22px 13px 0 23px; display: flex; flex-direction: column; gap: 17px; background: #5b9bd5; border: 1px solid #4a7fae; }
.page-box div { height: 114px; background: #000; color: #fff; display: flex; align-items: center; padding-left: 6px; }
.status { flex: none; height: 22px; display: flex; align-items: center; gap: 12px; background: #d04526; color: #fff; }

.remote-bar { flex: none; height: 45px; display: flex; background: linear-gradient(90deg, #c5efe6, #cdeeee 40%, #c9ecf5 70%, #c6f1e2); color: #222; font-size: 12px; }
.remote-start { width: 269px; padding: 8px 0 0 18px; }
.remote-apps { display: flex; }
.remote-apps span { position: relative; width: 44px; height: 45px; display: grid; place-items: center; }
.remote-apps .active { background: linear-gradient(#eef8f8, #eef8f8) center 5px / 36px 38px no-repeat; }
.run::after { content: ""; position: absolute; left: 50%; bottom: 1px; width: 6px; height: 3px; margin-left: -3px; border-radius: 3px; background: #7c8a8c; }
.active::after { width: 16px; margin-left: -8px; background: #0b6fd0; }
.remote-tray { margin-left: auto; padding-right: 18px; display: flex; align-items: center; gap: 17px; }
.lang { text-align: center; }
.remote-tray .lang { line-height: 15px; padding: 0 1px; }
.net { display: flex; gap: 8px; }
.clock { text-align: right; }
.remote-tray .clock { line-height: 16px; margin-right: -9px; }

/* overlays on the shared screen */
.zoom-dock { position: absolute; right: 0; bottom: 45px; width: 802px; }
.share-pill { margin-left: 175px; width: 452px; height: 23px; display: flex; align-items: center; border-radius: 5px 5px 0 0; overflow: hidden; background: #23d959; font-size: 12px; font-weight: 600; line-height: 16px; }
.share-msg { width: 263px; display: flex; align-items: center; gap: 10px; padding-left: 12px; color: #0f4a1b; }
.share-msg svg { width: 13px; height: 12px; }
.share-msg span { flex: 1; text-align: center; }
.share-msg svg:last-child { margin-right: 12px; }
.elapsed { width: 86px; height: 19px; margin-right: 8px; border-radius: 4px; background: #202326; color: #fff; display: flex; align-items: center; justify-content: center; gap: 5px; font-size: 11px; }
.stop { flex: 1; align-self: stretch; background: #e02828; color: #fff; }
.stop::before { content: ""; display: inline-block; width: 8px; height: 8px; margin-right: 4px; background: #fff; border-radius: 1px; vertical-align: 2px; }
.zoom-bar { height: 64px; display: flex; border-radius: 8px 8px 0 0; background: #0c0c0c; color: #b9b9b9; font-size: 12px; line-height: 16px; overflow: hidden; }
.zoom-bar button { position: relative; display: flex; flex-direction: column; align-items: center; gap: 8px; padding-top: 13px; }
.zoom-bar button > svg { width: 24px; height: 24px; }
.zoom-bar .chev { position: absolute; top: 21px; left: 50%; margin-left: 24px; width: 8px; height: 8px; }
.zoom-bar .z-people .chev, .zoom-bar .z-chat .chev { margin-left: 33px; }
.zoom-bar sup { position: absolute; top: 6px; left: 68px; }
.z-audio { width: 92px; }
.z-video { width: 74px; }
.z-people { width: 105px; margin-left: 7px; background: #333; border-radius: 10px; color: #e0e0e0; }
.z-chat { width: 98px; }
.z-share, .z-note, .z-more { width: 78px; }
.z-pause { width: 90px; }
.z-show { width: 96px; white-space: nowrap; }
.annotate { position: absolute; right: 10px; top: 22px; width: 42px; height: 635px; padding-top: 9px; display: flex; flex-direction: column; align-items: center; gap: 8px; border: 1px solid #4a4c4f; border-radius: 9px; background: #26282b; color: #f2f2f2; box-shadow: 5px 0 0 #b0b0b0; }
.annotate button { width: 32px; height: 32px; flex: none; border-radius: 6px; display: grid; place-items: center; }
.annotate svg { width: 16px; height: 16px; }
.annotate .on { background: #0e6fe8; }
.annotate .dim { color: #a5a5a5; }
.annotate .wide svg { width: 20px; height: 20px; }
.annotate hr { width: 24px; height: 2px; margin: 8px 0 6px; border: 0; background: #56585b; }
.annotate .quit { width: 24px; height: 24px; margin-top: 4px; background: #e02b2b; border-radius: 5px; }
.annotate .quit svg { width: 11px; height: 11px; }
.presenter { position: absolute; left: 19px; bottom: 16px; width: 167px; height: 36px; border-radius: 4px; background: rgba(70, 70, 70, .72); color: #fff; font-size: 17px; line-height: 36px; text-align: center; }

/* notes panel */
.notes { width: 479px; padding: 25px 33px 0 31px; border-left: 1px solid #dcdcdc; display: flex; flex-direction: column; }
.notes-head { display: flex; justify-content: space-between; align-items: center; height: 30px; padding-right: 10px; }
.notes-head h2 { font-size: 23px; font-weight: 600; line-height: 30px; }
.notes-tools { display: flex; align-items: center; height: 42px; margin: 40px 3px 0 4px; color: #555; }
.notes-tools button { margin-left: auto; }
.faces { width: 42px; height: 42px; margin-left: 159px; }
.notes h3 { font-size: 27px; font-weight: 600; line-height: 36px; margin-top: 66px; }
.note-row, .note-list li { display: flex; align-items: center; gap: 17px; margin-top: 13px; font-size: 20px; line-height: 28px; color: #616161; }
.note-row input { appearance: none; width: 22px; height: 22px; margin: 0 0 0 2px; border: 1px solid #8a8a8a; border-radius: 50%; }
.note-list li::before { content: ""; width: 5px; height: 5px; margin: 0 8px 0 11px; border-radius: 50%; background: #333; }
.note-row + h3, .note-list + h3 { margin-top: 85px; }
.add-task { display: flex; align-items: center; gap: 14px; margin: 21px 0 0 -7px; font-size: 21px; line-height: 28px; color: #424242; }

/* system taskbar */
.taskbar { flex: none; height: 71px; display: flex; background: #dddee9; border-top: 2px solid #b9b9bf; font-size: 18px; color: #1b1b1b; }
.task-start { position: relative; width: 407px; padding: 14px 0 0 32px; }
.task-start svg { width: 36px; height: 38px; }
.task-start span { position: absolute; left: 47px; top: 8px; width: 23px; height: 23px; border-radius: 50%; background: #c42b1c; color: #fff; font-size: 16px; line-height: 23px; text-align: center; }
.task-apps { display: flex; padding-bottom: 3px; }
.task-apps button { position: relative; width: 66px; display: grid; place-items: center; }
.task-apps .active { background: linear-gradient(#f0f1f6, #f0f1f6) center 5px / 54px 56px no-repeat; }
.taskbar .run::after { width: 9px; height: 5px; bottom: 4px; margin-left: -4px; background: #7a7a80; }
.taskbar .active::after { width: 24px; margin-left: -12px; background: #0078d4; }
.rec { position: absolute; right: 7px; top: 8px; width: 24px; height: 24px; border-radius: 50%; background: #d13438; }
.brief { position: absolute; left: 15px; bottom: 14px; width: 20px; height: 14px; }
.tray { margin-left: auto; padding: 0 31px 3px 0; display: flex; align-items: center; }
.tray .i26 { margin: 0 14px 0 26px; }
.tray-mic { width: 44px; height: 56px; border-radius: 4px; background: #eeeff5; display: grid; place-items: center; --cut: #eeeff5; }
.tray .lang { width: 68px; line-height: 24px; font-size: 17px; }
.tray .net { gap: 11px; margin-left: 12px; }
.tray .clock { width: 118px; line-height: 24px; }
.bell { margin-left: 13px; color: #0a3f92; }
```
